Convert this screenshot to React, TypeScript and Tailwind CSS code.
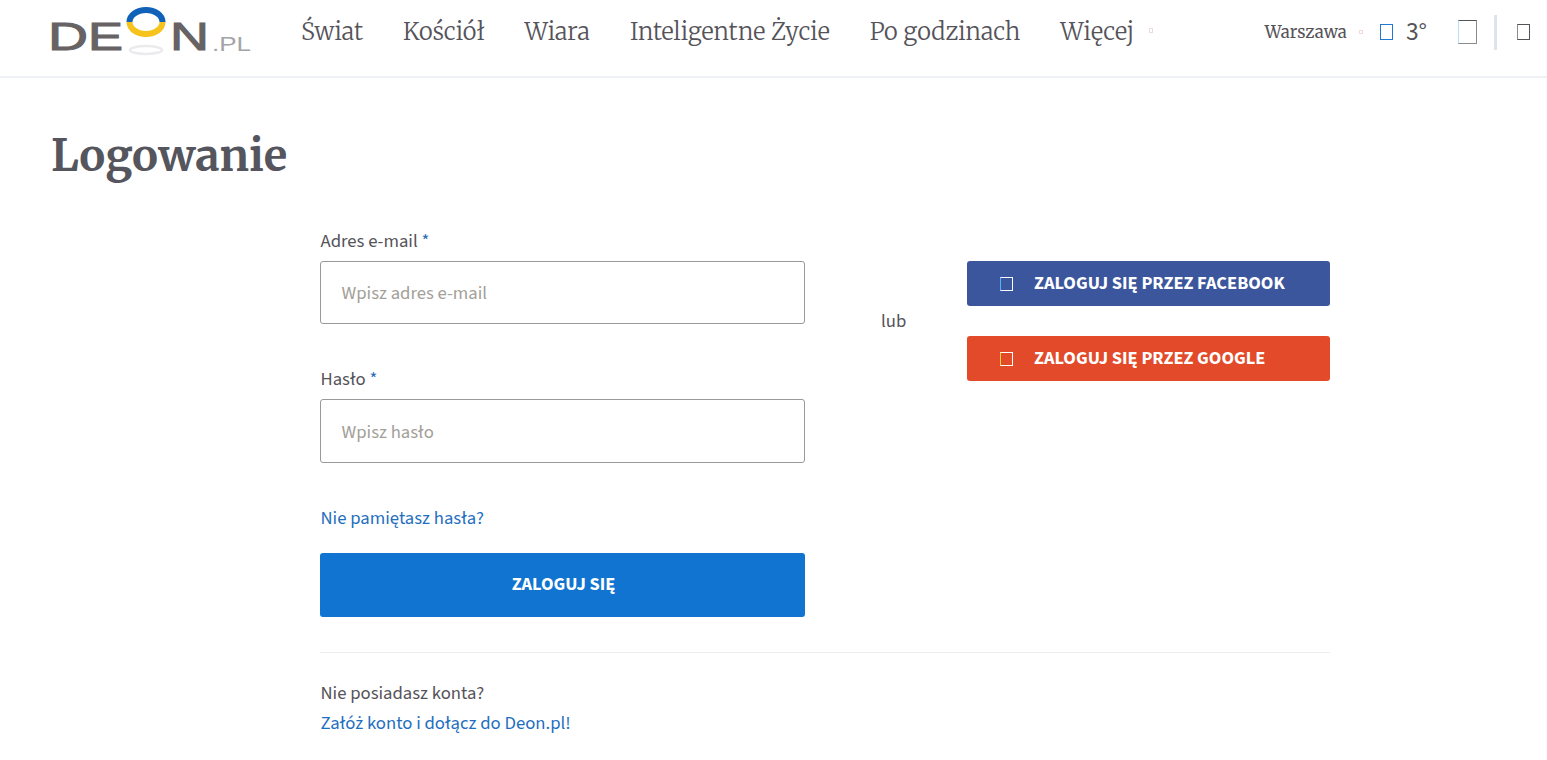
const serif = "font-['Merriweather','DejaVu_Serif','Liberation_Serif',serif]";
const sans = "font-['Source_Sans_Pro','Source_Sans_3','Lato','Noto_Sans',sans-serif]";

function Logo() {
  return (
    <svg width="202" height="58" viewBox="0 0 202 58" className="mb-[18px] shrink-0 overflow-visible" role="img" aria-label="Deon.pl">
      <ellipse cx="95" cy="50" rx="16" ry="4" fill="none" stroke="#ebebee" strokeWidth="2.5" />
      <text x="-3" y="50" fontFamily="Liberation Sans" fontSize="39" fill="#676263" stroke="#676263" strokeWidth="1" textLength="40" lengthAdjust="spacingAndGlyphs">D</text>
      <text x="37" y="50" fontFamily="Liberation Sans" fontSize="39" fill="#676263" stroke="#676263" strokeWidth="1" textLength="35" lengthAdjust="spacingAndGlyphs">E</text>
      <text x="119" y="50" fontFamily="Liberation Sans" fontSize="39" fill="#676263" stroke="#676263" strokeWidth="1" textLength="39" lengthAdjust="spacingAndGlyphs">N</text>
      <text x="161" y="51" fontFamily="Liberation Sans" fontSize="20" fill="#a4a4a8" textLength="39" lengthAdjust="spacingAndGlyphs">.PL</text>
      <path d="M78.5 22 A16.5 12 0 0 1 111.5 22" fill="none" stroke="#0f62b8" strokeWidth="6" />
      <path d="M78.5 22 A16.5 12 0 0 0 111.5 22" fill="none" stroke="#f6c21c" strokeWidth="6" />
    </svg>
  );
}

const nav = ["Świat", "Kościół", "Wiara", "Inteligentne Życie", "Po godzinach", "Więcej"];

function Field({ label, placeholder, h }: { label: string; placeholder: string; h: string }) {
  return (
    <div>
      <div className="h-[23px] pt-px pl-[0.5px] text-[18.7px] leading-[23px] text-[#55535a]">
        {label} <span className="text-[#2a6db5]">*</span>
      </div>
      <div className={`mt-[9px] flex items-center rounded-[3px] border border-[#999] pt-[2px] pl-[20.5px] text-[18.7px] text-[#a3a099] ${h}`}>
        {placeholder}
      </div>
    </div>
  );
}

function Social({ text, color, tofuLeft }: { text: string; color: string; tofuLeft: string }) {
  return (
    <div className={`flex h-[45px] items-center rounded-[3px] pl-[33px] text-[18.4px] font-bold text-white ${color}`}>
      <span className={`h-[14px] w-[13px] border border-white ${tofuLeft}`} />
      <span className="ml-[21px]">{text}</span>
    </div>
  );
}

export default function App() {
  return (
    <div className={`min-h-[760px] bg-white ${sans}`}>
      <header className="flex h-[78px] items-center border-b-2 border-[#eef1f6] pl-[51px] pr-[17px]">
        <Logo />
        <nav className={`ml-[48px] flex items-center gap-[40px] pb-[12px] text-[23.65px] font-light text-[#55535a] ${serif}`}>
          {nav.map((n) => (
            <span key={n}>{n}</span>
          ))}
          <span className="-ml-[25px] mb-[2px] h-[5px] w-[4px] border border-[#f0d9d9]" />
        </nav>
        <div className="ml-auto flex items-center pb-[12px]">
          <span className={`pt-[2px] text-[16.8px] text-[#55535a] ${serif}`}>Warszawa</span>
          <span className="ml-[12px] h-[4px] w-[4px] border border-[#f0d9d9]" />
          <span className="ml-[17px] h-[16px] w-[13px] border border-[#1f78d1]" />
          <span className="ml-[13px] text-[25.5px] text-[#55535a]">3°</span>
          <span className="ml-[31px] h-[24px] w-[19px] border border-[#8a8a92] border-t-[#55535a] border-l-[#bcdcf5]" />
          <span className="ml-[17px] h-[35px] w-[3px] bg-[#dfe3ee]" />
          <span className="ml-[20px] h-[16px] w-[13px] border border-[#55535a] border-l-[#8a8a92]" />
        </div>
      </header>

      <main className="pl-[51px] pr-[217px]">
        <h1 className={`pt-[50px] text-[43.5px] font-bold leading-[56px] text-[#55555e] ${serif}`}>Logowanie</h1>

        <div className="mt-[45px] ml-[269px]">
          <div className="flex">
            <div className="w-[485px]">
              <Field label="Adres e-mail" placeholder="Wpisz adres e-mail" h="h-[63px]" />
              <div className="mt-[43px]">
                <Field label="Hasło" placeholder="Wpisz hasło" h="h-[64px]" />
              </div>
              <div className="mt-[44px] pl-[0.5px] text-[18.7px] leading-[23px] text-[#1f6fc0]">Nie pamiętasz hasła?</div>
              <div className="mt-[23px] flex h-[64px] items-center justify-center pl-[2px] rounded-[3px] bg-[#1074d0] text-[18.4px] font-bold text-white">
                ZALOGUJ SIĘ
              </div>
            </div>
            <div className="ml-[76px] w-[86px] pt-[81px] text-[18.7px] leading-[23px] text-[#55535a]">lub</div>
            <div className="flex w-[363px] flex-col gap-[30px] pt-[32px]">
              <Social text="ZALOGUJ SIĘ PRZEZ FACEBOOK" color="bg-[#3b569d]" tofuLeft="border-l-[#4db5ff]" />
              <Social text="ZALOGUJ SIĘ PRZEZ GOOGLE" color="bg-[#e24a29]" tofuLeft="border-l-[#ffd23c]" />
            </div>
          </div>
          <div className="mt-[35px] h-px w-[1010px] bg-[#eeeeee]" />
          <div className="mt-[29px] pl-[0.5px] text-[18.7px] leading-[23px] text-[#55535a]">Nie posiadasz konta?</div>
          <div className="mt-[7px] pl-[0.5px] text-[18.7px] leading-[23px] text-[#1f6fc0]">Załóż konto i dołącz do Deon.pl!</div>
        </div>
      </main>
    </div>
  );
}
